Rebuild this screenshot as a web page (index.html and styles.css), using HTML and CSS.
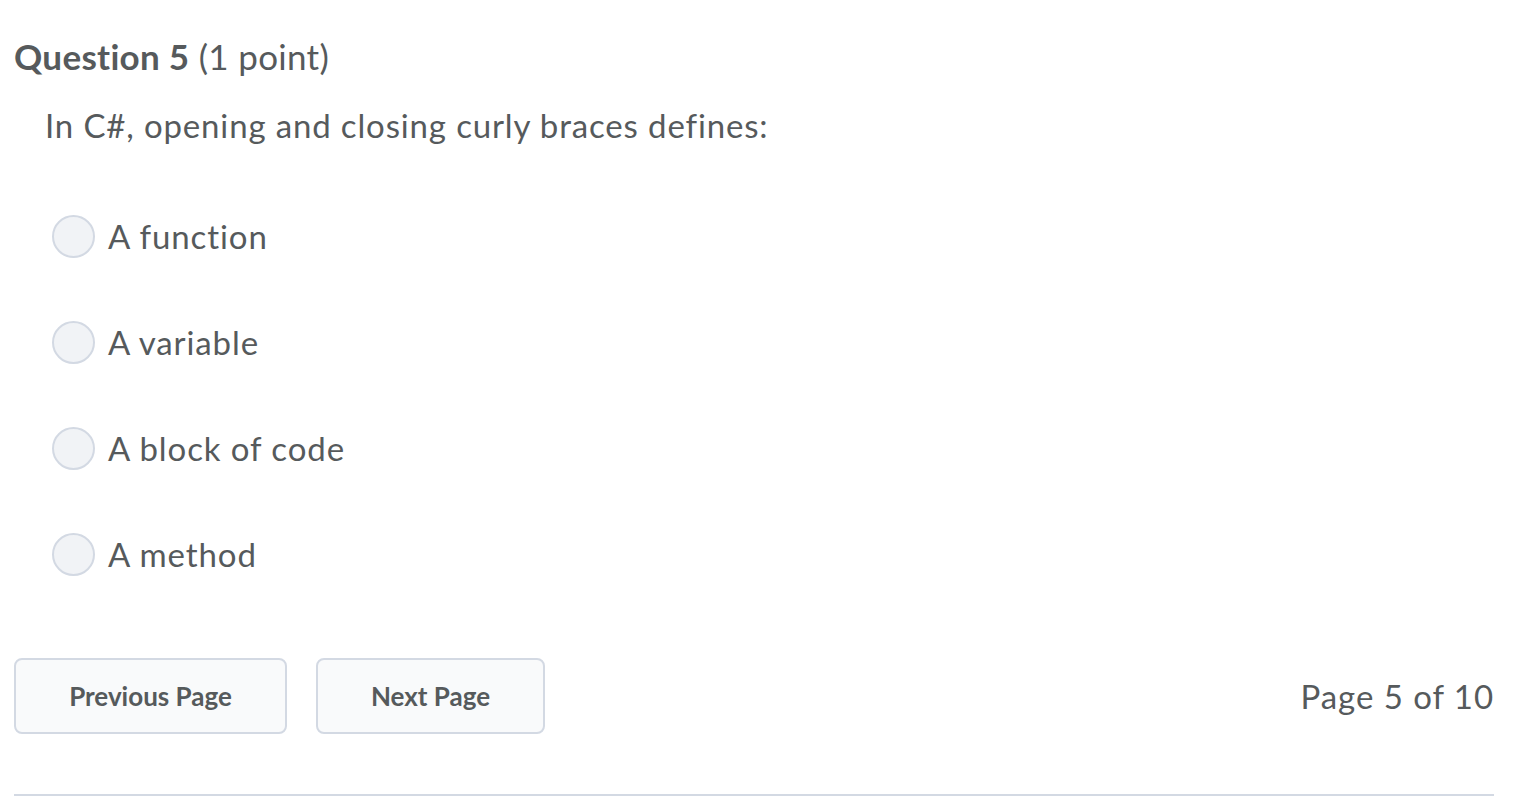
FILE: index.html
```html
<!DOCTYPE html>
<html>
<head>
<meta charset="utf-8">
<link rel="stylesheet" href="styles.css">
</head>
<body>
<div class="page">
  <h2 class="qtitle"><span class="qnum">Question 5</span> <span class="qpts">(1 point)</span></h2>
  <div class="qbody">
    <p class="qtext">In C#, opening and closing curly braces defines:</p>
    <ul class="options">
      <li class="option"><span class="radio"></span><span class="label">A function</span></li>
      <li class="option"><span class="radio"></span><span class="label">A variable</span></li>
      <li class="option"><span class="radio"></span><span class="label">A block of code</span></li>
      <li class="option"><span class="radio"></span><span class="label">A method</span></li>
    </ul>
  </div>
  <div class="nav">
    <div class="buttons">
      <button class="btn btn-prev">Previous Page</button>
      <button class="btn btn-next">Next Page</button>
    </div>
    <div class="pageinfo">Page 5 of 10</div>
  </div>
  <hr class="rule">
</div>
</body>
</html>
```
FILE: styles.css
```css
html, body {
  margin: 0;
  padding: 0;
  background: #ffffff;
}
body {
  font-family: Lato, "Open Sans", sans-serif;
  color: #565a5c;
}
.page {
  width: 1480px;
  padding: 0 0 0 14px;
}
.qtitle {
  margin: 0;
  padding-top: 35px;
  font-size: 35px;
  line-height: 42px;
  font-weight: normal;
  letter-spacing: 0.3px;
}
.qnum {
  font-weight: bold;
}
.qbody {
  padding-left: 31px;
}
.qtext {
  margin: 0;
  padding-top: 28px;
  font-size: 33px;
  line-height: 40px;
  letter-spacing: 0.85px;
}
.options {
  list-style: none;
  margin: 0;
  padding: 70px 0 0 7px;
  display: flex;
  flex-direction: column;
  gap: 64px;
}
.option {
  display: flex;
  align-items: center;
  gap: 13px;
  height: 42px;
}
.radio {
  width: 39px;
  height: 39px;
  border: 2px solid #d3d9e3;
  border-radius: 50%;
  background: #f1f3f6;
  flex: none;
}
.label {
  font-size: 33px;
  line-height: 42px;
  letter-spacing: 0.9px;
}
.nav {
  display: flex;
  justify-content: space-between;
  align-items: center;
  margin-top: 83px;
}
.buttons {
  display: flex;
  gap: 29px;
}
.btn {
  font-family: Lato, "Open Sans", sans-serif;
  font-weight: bold;
  font-size: 26px;
  color: #565a5c;
  background: #f9fafb;
  border: 2px solid #d3d9e3;
  border-radius: 8px;
  height: 76px;
  padding: 0;
}
.btn-prev {
  width: 273px;
}
.btn-next {
  width: 229px;
}
.pageinfo {
  font-size: 33px;
  line-height: 40px;
  letter-spacing: 0.95px;
}
.rule {
  margin: 60px 0 0 0;
  border: 0;
  height: 2px;
  background: #d3d9e3;
}
```
